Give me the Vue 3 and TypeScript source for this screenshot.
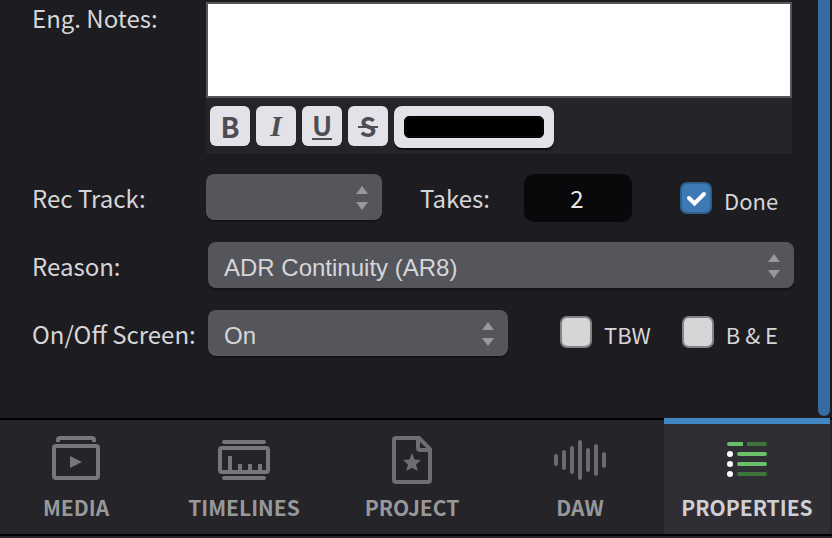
<script setup lang="ts">
import { ref } from 'vue'

type Shape = { d: string; fill?: string; stroke?: string; cap?: 'round' | 'butt' }
type Tab = { name: string; shapes: Shape[] }

const gray = '#777779'

const tabs: Tab[] = [
  {
    name: 'MEDIA',
    shapes: [
      { d: 'M10 6V4Q10 2 12 2H44Q46 2 46 4V6', stroke: gray },
      { d: 'M8 10H48Q50 10 50 12V40Q50 42 48 42H8Q6 42 6 40V12Q6 10 8 10Z', stroke: gray },
      { d: 'M22 20L34 26L22 32Z', fill: gray },
    ],
  },
  {
    name: 'TIMELINES',
    shapes: [
      { d: 'M8 6H48M8 42H48', stroke: gray, cap: 'round' },
      { d: 'M6 12H50Q52 12 52 14V34Q52 36 50 36H6Q4 36 4 34V14Q4 12 6 12Z', stroke: gray },
      { d: 'M14 20V36M24 28V36M34 28V36M44 28V36', stroke: gray },
    ],
  },
  {
    name: 'PROJECT',
    shapes: [
      { d: 'M12 2H35L46 13V44Q46 46 44 46H12Q10 46 10 44V4Q10 2 12 2Z', stroke: '#6e6e71' },
      { d: 'M34 2V12Q34 14 36 14H46', stroke: '#6e6e71' },
      { d: 'M28 17L30.6 23.6L37 24L32 28.5L33.8 35L28 31.8L22.2 35L24 28.5L19 24L25.4 23.6Z', fill: '#6e6e71' },
    ],
  },
  {
    name: 'DAW',
    shapes: [
      {
        d: 'M4 20V28M12 16V32M20 12V36M28 6V42M36 14V34M44 10V38M52 18V30',
        stroke: '#6b6b6e',
        cap: 'round',
      },
    ],
  },
  {
    name: 'PROPERTIES',
    shapes: [
      { d: 'M10 6H24V10H10A2 2 0 0 1 10 6Z', fill: '#6abf69' },
      { d: 'M28 6H46A2 2 0 0 1 46 10H28Z', fill: '#3d753c' },
      { d: 'M20 18H46M20 28H46', stroke: '#6abf69', cap: 'round' },
      { d: 'M20 38H46', stroke: '#3d753c', cap: 'round' },
      { d: 'M8 18a3 3 0 1 0 6 0a3 3 0 1 0 -6 0M8 28a3 3 0 1 0 6 0a3 3 0 1 0 -6 0M8 38a3 3 0 1 0 6 0a3 3 0 1 0 -6 0', fill: '#fff' },
    ],
  },
]

const activeTab = ref('PROPERTIES')
const notes = ref('')
const color = ref('#000000')
const track = ref('')
const takes = ref('2')
const done = ref(true)
const reason = ref('ADR Continuity (AR8)')
const screen = ref('On')
const tbw = ref(false)
const be = ref(false)
</script>

<template>
  <div class="panel">
    <div class="scroller">
      <form class="form" @submit.prevent>
        <div class="row upper">
          <label class="caption notes-caption" for="notes">Eng. Notes:</label>
          <div class="editor">
            <textarea id="notes" v-model="notes" class="notes"></textarea>
            <div class="toolbar">
              <button type="button" class="tool bold">B</button>
              <button type="button" class="tool italic">I</button>
              <button type="button" class="tool underline"><span>U</span></button>
              <button type="button" class="tool strike">S</button>
              <input v-model="color" type="color" class="swatch" aria-label="Text color" />
            </div>
          </div>
        </div>

        <div class="row upper">
          <label class="caption" for="track">Rec Track:</label>
          <div class="fields">
            <div class="picker track">
              <select id="track" v-model="track"><option value=""></option></select>
              <svg class="arrows" viewBox="0 0 12 24"><path d="M6 0L12 8H0ZM0 16H12L6 24Z" /></svg>
            </div>
            <label class="caption takes-caption" for="takes">Takes:</label>
            <input id="takes" v-model="takes" type="text" class="takes" />
            <label class="check done"><input v-model="done" type="checkbox" /><span>Done</span></label>
          </div>
        </div>

        <div class="row">
          <label class="caption" for="reason">Reason:</label>
          <div class="fields">
            <div class="picker reason">
              <select id="reason" v-model="reason"><option>ADR Continuity (AR8)</option></select>
              <svg class="arrows" viewBox="0 0 12 24"><path d="M6 0L12 8H0ZM0 16H12L6 24Z" /></svg>
            </div>
          </div>
        </div>

        <div class="row">
          <label class="caption" for="screen">On/Off Screen:</label>
          <div class="fields">
            <div class="picker screen">
              <select id="screen" v-model="screen"><option>On</option></select>
              <svg class="arrows" viewBox="0 0 12 24"><path d="M6 0L12 8H0ZM0 16H12L6 24Z" /></svg>
            </div>
            <div class="checks">
              <label class="check"><input v-model="tbw" type="checkbox" /><span>TBW</span></label>
              <label class="check"><input v-model="be" type="checkbox" /><span>B &amp; E</span></label>
            </div>
          </div>
        </div>
      </form>
      <div class="scrollbar"></div>
    </div>

    <nav class="tabs">
      <button
        v-for="tab in tabs"
        :key="tab.name"
        type="button"
        class="tab"
        :class="{ active: tab.name === activeTab }"
        @click="activeTab = tab.name"
      >
        <svg class="icon" viewBox="0 0 56 48">
          <path
            v-for="(shape, i) in tab.shapes"
            :key="i"
            :d="shape.d"
            :fill="shape.fill ?? 'none'"
            :stroke="shape.stroke ?? 'none'"
            :stroke-linecap="shape.cap ?? 'butt'"
            stroke-width="4"
          />
        </svg>
        <span>{{ tab.name }}</span>
      </button>
    </nav>
  </div>
</template>

<style>
body {
  background: #252529;
}
</style>

<style scoped>
.panel {
  min-height: 100vh;
  box-sizing: border-box;
  padding-bottom: 2px;
  display: flex;
  flex-direction: column;
  overflow: hidden;
  background: #252529;
  color: #d6d6d8;
  font-family: "Noto Sans CJK SC", "Open Sans", sans-serif;
  font-size: 24px;
  line-height: 36px;
}

.panel *,
.panel *::before {
  box-sizing: border-box;
}

.scroller {
  flex: 1;
  display: flex;
  padding-right: 2px;
  background: #1d1c21;
}

.form {
  flex: 1;
  min-width: 0;
  display: flex;
  flex-direction: column;
  gap: 20px;
  padding: 2px 24px 0 32px;
}

.scrollbar {
  width: 12px;
  margin-bottom: 2px;
  background: #356c9f;
  border-radius: 0 0 6px 6px;
}

.row {
  display: grid;
  grid-template-columns: 176px 1fr;
  align-items: start;
}

.upper {
  grid-template-columns: 174px 1fr;
}

.caption {
  line-height: 48px;
  white-space: nowrap;
}

.notes-caption {
  line-height: 32px;
}

.editor {
  margin-right: 2px;
  background: #252529;
}

.notes {
  display: block;
  width: 100%;
  height: 96px;
  padding: 8px;
  border: 2px solid #55555a;
  background: #fff;
  color: #1d1c21;
  font: inherit;
  resize: none;
  outline: none;
}

.toolbar {
  display: flex;
  align-items: flex-start;
  gap: 6px;
  height: 56px;
  padding: 8px 4px;
}

.tool {
  width: 40px;
  height: 40px;
  padding: 0;
  border: 0;
  border-radius: 6px;
  background: #e3e2e8;
  color: #4d4d52;
  font-family: inherit;
  font-size: 27px;
  font-weight: 700;
  line-height: 38px;
}

.tool.bold {
  font-size: 28px;
}

.tool.italic {
  font-family: "Liberation Serif", serif;
  font-size: 30px;
  font-style: italic;
  line-height: 40px;
}

.underline span {
  display: block;
  width: 20px;
  height: 34px;
  margin: 0 auto 6px;
  border-bottom: 2px solid #4d4d52;
  line-height: 38px;
  text-align: center;
}

.strike {
  position: relative;
}

.strike::before {
  content: "";
  position: absolute;
  left: 10px;
  right: 10px;
  top: 20px;
  height: 2px;
  background: #4d4d52;
}

.swatch {
  appearance: none;
  width: 160px;
  height: 42px;
  padding: 10px;
  border: 0;
  border-radius: 8px;
  background: #e3e2e8;
  box-shadow: 0 2px 0 #0e0e10;
}

.swatch::-webkit-color-swatch-wrapper {
  padding: 0;
}

.swatch::-webkit-color-swatch {
  border: 1px solid #000;
  border-radius: 5px;
  box-shadow: inset 0 0 1px #777;
}

.fields {
  display: flex;
  align-items: flex-start;
}

.picker {
  position: relative;
}

.picker select {
  display: block;
  appearance: none;
  width: 100%;
  height: 46px;
  padding: 4px 48px 0 16px;
  border: 0;
  border-radius: 8px;
  background: #55555c;
  box-shadow: 0 2px 1px #141417;
  color: #d6d6d8;
  font-family: "Liberation Sans", Arial, sans-serif;
  font-size: 24px;
}

.arrows {
  position: absolute;
  top: 12px;
  right: 14px;
  width: 12px;
  height: 24px;
  fill: #98989b;
  pointer-events: none;
}

.track {
  width: 176px;
}

.reason {
  flex: 1;
}

.screen {
  width: 300px;
}

.takes-caption {
  width: 104px;
  margin-left: 38px;
}

.takes {
  width: 108px;
  height: 48px;
  padding: 0 2px 2px 0;
  border: 0;
  border-radius: 10px;
  background: #09090b;
  color: #e8e8ea;
  font: inherit;
  text-align: center;
}

.check {
  display: flex;
  align-items: flex-start;
  gap: 12px;
  padding-top: 6px;
  font-size: 22px;
  white-space: nowrap;
}

.done {
  margin-left: 48px;
  padding-top: 8px;
}

.checks {
  flex: 1;
  display: flex;
  justify-content: space-between;
  padding: 0 16px 0 52px;
}

.check input {
  appearance: none;
  flex: none;
  width: 32px;
  height: 32px;
  margin: 0;
  border: 2px solid #838385;
  border-radius: 7px;
  background: #d6d6d8;
}

.check input:checked {
  border-color: #305f8d;
  background: #3d7ab5;
}

.check input:checked::before {
  content: "";
  display: block;
  width: 28px;
  height: 28px;
  background: url("data:image/svg+xml,%3Csvg xmlns='http://www.w3.org/2000/svg' viewBox='0 0 28 28'%3E%3Cpath d='M7 14L12.5 19.5L22 10' fill='none' stroke='white' stroke-width='4' stroke-linecap='round'/%3E%3C/svg%3E");
}

.tabs {
  display: grid;
  grid-template-columns: repeat(4, 168fr) 166fr;
  height: 118px;
  margin-left: -8px;
  padding-right: 2px;
  border-top: 2px solid #000;
  border-bottom: 2px solid #000;
}

.tab {
  display: flex;
  flex-direction: column;
  align-items: center;
  gap: 6px;
  min-width: 0;
  padding: 16px 0 0;
  border: 0;
  background: #252529;
  color: #98989a;
  font-family: inherit;
  font-size: 21px;
  font-weight: 700;
  line-height: 34px;
}

.tab.active {
  margin-top: -2px;
  padding-top: 12px;
  border-top: 6px solid #4186c2;
  background: #2f2e34;
  color: #d0d0d3;
}

.icon {
  flex: none;
  width: 56px;
  height: 48px;
}
</style>
